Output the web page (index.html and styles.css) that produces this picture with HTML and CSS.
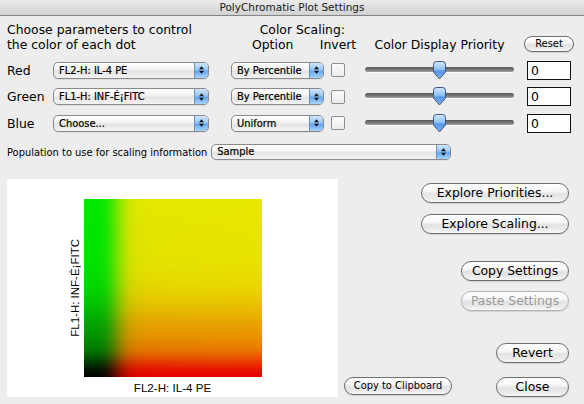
FILE: index.html
```html
<!DOCTYPE html>
<html>
<head>
<meta charset="utf-8">
<title>PolyChromatic Plot Settings</title>
<link rel="stylesheet" href="styles.css">
</head>
<body>
<div class="window">
  <div class="titlebar">PolyChromatic Plot Settings</div>
  <div class="content">
    <div class="cols header">
      <div class="h-intro">Choose parameters to control<br>the color of each dot</div>
      <div class="h-scaling">Color Scaling:</div>
      <div class="h-option">Option</div>
      <div class="h-invert">Invert</div>
      <div class="h-priority">Color Display Priority</div>
      <div class="h-reset"><button class="btn small reset">Reset</button></div>
    </div>

    <div class="cols rows">
      <div class="label">Red</div>
      <div class="popup p-param"><span class="popup-text">FL2-H: IL-4 PE</span><span class="popup-arrows"><svg width="7" height="10" viewBox="0 0 7 10"><path d="M1 4.2 L3.5 1.2 L6 4.2 Z M1 5.8 L3.5 8.8 L6 5.8 Z" fill="#111"/></svg></span></div>
      <div class="popup p-option"><span class="popup-text">By Percentile</span><span class="popup-arrows"><svg width="7" height="10" viewBox="0 0 7 10"><path d="M1 4.2 L3.5 1.2 L6 4.2 Z M1 5.8 L3.5 8.8 L6 5.8 Z" fill="#111"/></svg></span></div>
      <div class="check"></div>
      <div class="slider"><div class="track"></div><svg class="thumb" width="15" height="19" viewBox="0 0 15 19"><defs><linearGradient id="tg1" x1="0" y1="0" x2="0" y2="1"><stop offset="0" stop-color="#d6e9fd"/><stop offset="0.45" stop-color="#8ec0f5"/><stop offset="0.55" stop-color="#5597ea"/><stop offset="1" stop-color="#7fb6f2"/></linearGradient></defs><path d="M1.5 3.5 Q1.5 0.5 4.5 0.5 H10.5 Q13.5 0.5 13.5 3.5 V11 L7.5 18 L1.5 11 Z" fill="url(#tg1)" stroke="#3f5677" stroke-width="1"/></svg></div>
      <div class="field">0</div>

      <div class="label">Green</div>
      <div class="popup p-param"><span class="popup-text">FL1-H: INF-É¡FITC</span><span class="popup-arrows"><svg width="7" height="10" viewBox="0 0 7 10"><path d="M1 4.2 L3.5 1.2 L6 4.2 Z M1 5.8 L3.5 8.8 L6 5.8 Z" fill="#111"/></svg></span></div>
      <div class="popup p-option"><span class="popup-text">By Percentile</span><span class="popup-arrows"><svg width="7" height="10" viewBox="0 0 7 10"><path d="M1 4.2 L3.5 1.2 L6 4.2 Z M1 5.8 L3.5 8.8 L6 5.8 Z" fill="#111"/></svg></span></div>
      <div class="check"></div>
      <div class="slider"><div class="track"></div><svg class="thumb" width="15" height="19" viewBox="0 0 15 19"><defs><linearGradient id="tg2" x1="0" y1="0" x2="0" y2="1"><stop offset="0" stop-color="#d6e9fd"/><stop offset="0.45" stop-color="#8ec0f5"/><stop offset="0.55" stop-color="#5597ea"/><stop offset="1" stop-color="#7fb6f2"/></linearGradient></defs><path d="M1.5 3.5 Q1.5 0.5 4.5 0.5 H10.5 Q13.5 0.5 13.5 3.5 V11 L7.5 18 L1.5 11 Z" fill="url(#tg2)" stroke="#3f5677" stroke-width="1"/></svg></div>
      <div class="field">0</div>

      <div class="label">Blue</div>
      <div class="popup p-param"><span class="popup-text">Choose...</span><span class="popup-arrows"><svg width="7" height="10" viewBox="0 0 7 10"><path d="M1 4.2 L3.5 1.2 L6 4.2 Z M1 5.8 L3.5 8.8 L6 5.8 Z" fill="#111"/></svg></span></div>
      <div class="popup p-option"><span class="popup-text">Uniform</span><span class="popup-arrows"><svg width="7" height="10" viewBox="0 0 7 10"><path d="M1 4.2 L3.5 1.2 L6 4.2 Z M1 5.8 L3.5 8.8 L6 5.8 Z" fill="#111"/></svg></span></div>
      <div class="check"></div>
      <div class="slider"><div class="track"></div><svg class="thumb" width="15" height="19" viewBox="0 0 15 19"><defs><linearGradient id="tg3" x1="0" y1="0" x2="0" y2="1"><stop offset="0" stop-color="#d6e9fd"/><stop offset="0.45" stop-color="#8ec0f5"/><stop offset="0.55" stop-color="#5597ea"/><stop offset="1" stop-color="#7fb6f2"/></linearGradient></defs><path d="M1.5 3.5 Q1.5 0.5 4.5 0.5 H10.5 Q13.5 0.5 13.5 3.5 V11 L7.5 18 L1.5 11 Z" fill="url(#tg3)" stroke="#3f5677" stroke-width="1"/></svg></div>
      <div class="field">0</div>
    </div>

    <div class="pop-row">
      <span class="pop-label">Population to use for scaling information</span>
      <div class="popup p-pop"><span class="popup-text">Sample</span><span class="popup-arrows"><svg width="7" height="10" viewBox="0 0 7 10"><path d="M1 4.2 L3.5 1.2 L6 4.2 Z M1 5.8 L3.5 8.8 L6 5.8 Z" fill="#111"/></svg></span></div>
    </div>

    <div class="lower">
      <div class="plot">
        <div class="ylabel">FL1-H: INF-É¡FITC</div>
        <div class="square"></div>
        <div class="xlabel">FL2-H: IL-4 PE</div>
      </div>
      <div class="side">
        <button class="btn b-explore b-first">Explore Priorities...</button>
        <button class="btn b-explore b-scaling">Explore Scaling...</button>
        <button class="btn b-copy">Copy Settings</button>
        <button class="btn b-copy b-paste" disabled>Paste Settings</button>
        <button class="btn b-close b-revert">Revert</button>
        <div class="bottom-row">
          <button class="btn small clip">Copy to Clipboard</button>
          <button class="btn b-close">Close</button>
        </div>
      </div>
    </div>
  </div>
</div>
</body>
</html>
```

FILE: styles.css
```css
* { box-sizing: border-box; }
html, body { margin: 0; padding: 0; }
body {
  width: 584px;
  height: 404px;
  overflow: hidden;
  background: #ededed;
  font-family: "DejaVu Sans", sans-serif;
  font-size: 12.4px;
  color: #000;
}
.window { width: 584px; height: 404px; display: flex; flex-direction: column; }
.titlebar {
  height: 16px;
  flex: none;
  background: linear-gradient(#ebebeb, #d2d2d2);
  border-bottom: 1px solid #858585;
  font-size: 10.5px;
  line-height: 15px;
  text-align: center;
  color: #1a1a1a;
}
.content { padding: 6px 7px 0 7px; }

.cols { display: grid; grid-template-columns: 46px 178px 93px 28px 175px 44px; }

.header { grid-template-rows: 15px 15px; line-height: 15px; white-space: nowrap; }
.h-intro { grid-column: 1 / 3; grid-row: 1 / 3; }
.h-scaling { grid-column: 3 / 5; grid-row: 1; text-align: right; padding-right: 7px; }
.h-option { grid-column: 3; grid-row: 2; padding-left: 21px; }
.h-invert { grid-column: 4; grid-row: 2; justify-self: center; }
.h-priority { grid-column: 5; grid-row: 2; justify-self: center; }
.h-reset { grid-column: 6; grid-row: 1 / 3; justify-self: center; align-self: end; display: flex; }

.rows { margin-top: 4.75px; grid-auto-rows: 26.5px; align-items: center; }
.label { line-height: 15px; }

.popup {
  display: flex;
  height: 17px;
  border: 1px solid #8a8a8a;
  border-radius: 5px;
  background: linear-gradient(#ffffff 0%, #f5f5f5 40%, #e4e4e4 56%, #f3f3f3 100%);
  overflow: hidden;
  font-size: 9.9px;
  box-shadow: 0 1px 0 rgba(0, 0, 0, 0.06);
}
.p-param { width: 156px; justify-self: start; }
.p-option { width: 93px; justify-self: start; }
.popup-text {
  flex: 1;
  padding-left: 5px;
  line-height: 15px;
  white-space: nowrap;
  overflow: hidden;
  -webkit-text-stroke: 0.2px #000;
}
.popup-arrows {
  flex: none;
  width: 14px;
  border-left: 1px solid #6a8fbf;
  background: linear-gradient(#cfe5fb 0%, #9cc9f6 42%, #66a6ee 56%, #a8d4fb 100%);
  display: flex;
  align-items: center;
  justify-content: center;
}

.check {
  width: 14px;
  height: 14px;
  justify-self: center;
  border: 1px solid #8e8e8e;
  border-radius: 2px;
  background: linear-gradient(#fbfbfb, #ececec);
}

.slider { position: relative; width: 149px; height: 19px; justify-self: center; }
.track {
  margin-top: 6px;
  height: 5px;
  border-radius: 3px;
  background: linear-gradient(#575757, #7a7a7a 55%, #a2a2a2);
  box-shadow: 0 1px 0 rgba(255, 255, 255, 0.8);
}
.thumb { position: absolute; left: 67px; top: 0; }

.field {
  width: 44px;
  height: 19px;
  border: 1px solid #111;
  background: #fff;
  padding-left: 3px;
  line-height: 17px;
}

.pop-row { display: flex; align-items: center; gap: 4px; height: 16px; margin-top: 7.75px; font-size: 9.9px; }
.pop-label { white-space: nowrap; }
.p-pop { width: 240px; height: 16px; }
.p-pop .popup-text { line-height: 14px; }

.lower { display: flex; margin-top: 19px; }
.plot {
  flex: none;
  width: 331px;
  height: 218px;
  background: #fff;
  display: grid;
  grid-template-columns: 1fr 178px 1fr;
  grid-template-rows: 178px auto;
  align-content: start;
  padding-top: 20px;
}
.square {
  grid-column: 2;
  grid-row: 1;
  background-color: #000;
  background-image:
    linear-gradient(to right, rgb(0,0,0) 0%, rgb(5,0,0) 9%, rgb(30,0,0) 13%, rgb(70,0,0) 16%, rgb(120,0,0) 19%, rgb(165,0,0) 22%, rgb(198,0,0) 25%, rgb(218,0,0) 29%, rgb(228,0,0) 36%, rgb(233,0,0) 100%),
    linear-gradient(to top, rgb(0,0,0) 0%, rgb(0,18,0) 4%, rgb(0,55,0) 8%, rgb(0,95,0) 12%, rgb(0,122,0) 16%, rgb(0,143,0) 22%, rgb(0,163,0) 30%, rgb(0,192,0) 40%, rgb(0,213,0) 50%, rgb(0,225,0) 62%, rgb(0,232,0) 100%);
  background-blend-mode: screen;
}
.ylabel {
  grid-column: 1;
  grid-row: 1;
  justify-self: end;
  align-self: center;
  margin-right: 2px;
  writing-mode: vertical-rl;
  transform: rotate(180deg);
  font-family: "Liberation Sans", sans-serif;
  font-size: 11.5px;
  line-height: 13px;
  white-space: nowrap;
}
.xlabel {
  grid-column: 2;
  grid-row: 2;
  text-align: center;
  margin-top: 4px;
  font-family: "Liberation Sans", sans-serif;
  font-size: 11.6px;
  line-height: 14px;
  white-space: nowrap;
}

.side { flex: 1; display: flex; flex-direction: column; align-items: flex-end; padding-right: 8px; }

button { font-family: inherit; margin: 0; padding: 0; color: #000; }
.btn {
  height: 20px;
  border: 1px solid #6f6f6f;
  border-radius: 10px;
  background: linear-gradient(#ffffff 0%, #f7f7f7 40%, #e3e3e3 55%, #eaeaea 80%, #f8f8f8 100%);
  font-size: 12.4px;
  line-height: 18px;
  text-align: center;
  white-space: nowrap;
  box-shadow: 0 1px 1px rgba(0, 0, 0, 0.12);
}
.btn.small { font-size: 9.9px; line-height: 14px; }
.reset { width: 50px; height: 16px; }
.b-explore { width: 148px; }
.b-first { margin-top: 4px; }
.b-scaling { margin-top: 11px; }
.b-copy { width: 108px; margin-top: 27px; }
.b-paste { margin-top: 10px; color: #9a9a9a; border-color: #b3b3b3; }
.b-close { width: 73px; }
.b-revert { margin-top: 32px; }
.bottom-row { align-self: stretch; display: flex; justify-content: space-between; align-items: flex-start; margin-top: 14px; padding-left: 6px; }
.clip { width: 108px; height: 18px; line-height: 16px; }
```
